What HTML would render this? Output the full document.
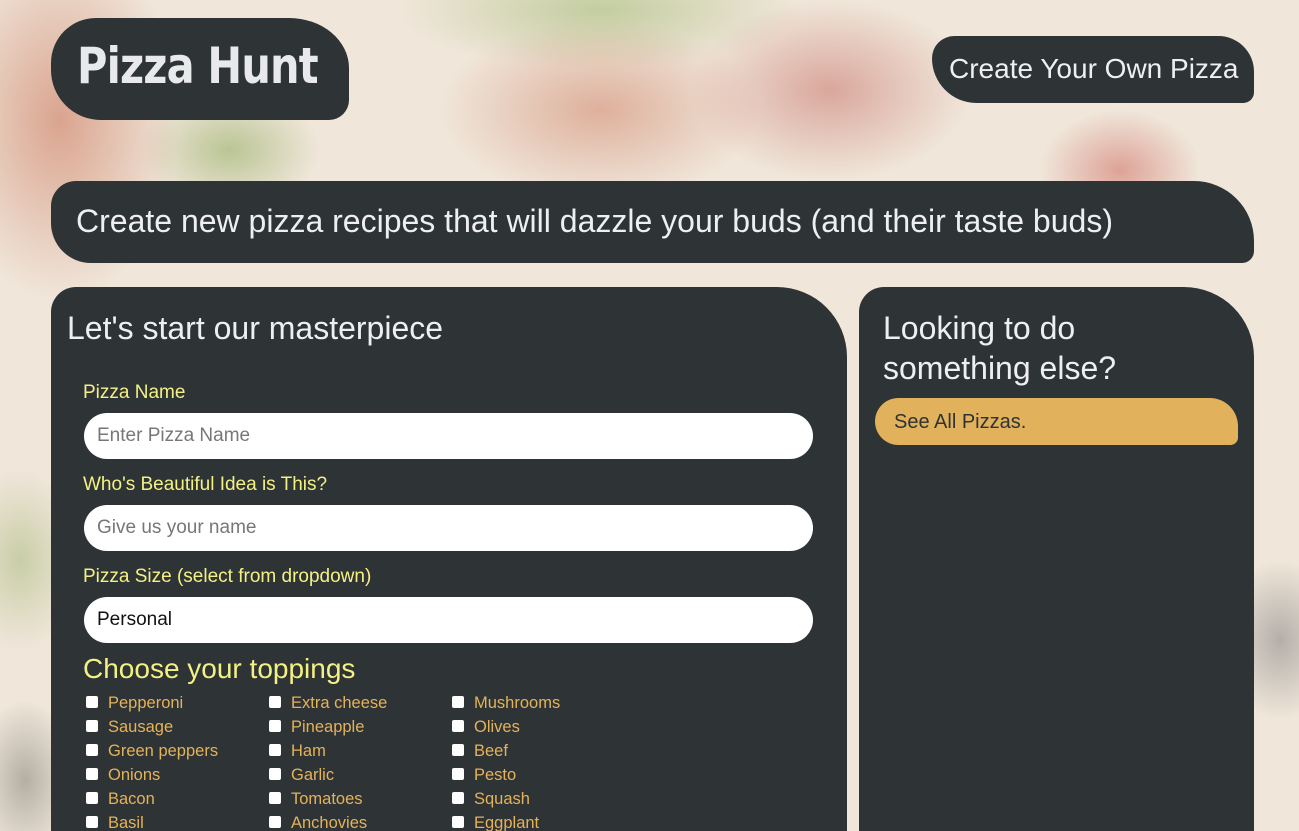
<!DOCTYPE html>
<html><head><meta charset="utf-8"><style>
*{box-sizing:border-box;margin:0;padding:0}
html,body{width:1299px;height:831px;overflow:hidden}
body{font-family:"Liberation Sans",Arial,sans-serif;position:relative;
background:
radial-gradient(ellipse 120px 180px at 60px 120px,rgba(200,110,80,.55),transparent),
radial-gradient(ellipse 160px 90px at 600px 110px,rgba(200,110,80,.45),transparent),
radial-gradient(ellipse 140px 90px at 830px 90px,rgba(190,90,80,.45),transparent),
radial-gradient(ellipse 200px 60px at 600px 10px,rgba(150,180,100,.5),transparent),
radial-gradient(ellipse 90px 60px at 230px 150px,rgba(140,170,90,.55),transparent),
radial-gradient(ellipse 60px 90px at 20px 560px,rgba(140,170,90,.4),transparent),
radial-gradient(ellipse 60px 80px at 1280px 640px,rgba(120,120,120,.5),transparent),
radial-gradient(ellipse 80px 60px at 1120px 170px,rgba(200,80,70,.45),transparent),
radial-gradient(ellipse 50px 80px at 25px 780px,rgba(120,120,110,.5),transparent),
#f0e6da;}
.dark{background:#2e3336;position:absolute}
.logo{left:51px;top:18px;width:298px;height:102px;border-radius:45px 60px 20px 50px/45px 50px 20px 50px;color:#e8e9eb;font-family:"DejaVu Sans",sans-serif;font-weight:bold;font-size:50px;padding:19px 0 0 26px;letter-spacing:-1px;white-space:nowrap}
.logo span{display:inline-block;transform:scaleX(.83);transform-origin:left}
.cta{left:932px;top:36px;width:322px;height:67px;border-radius:25px 40px 12px 50px;color:#eeeff1;font-size:28px;padding:17px 0 0 17px;white-space:nowrap}
.tag{left:51px;top:181px;width:1203px;height:82px;border-radius:25px 60px 12px 40px;color:#eeeff1;font-size:32px;padding:22px 0 0 25px;white-space:nowrap}
.main{left:51px;top:287px;width:796px;height:560px;border-radius:25px 70px 0 0}
.side{left:859px;top:287px;width:395px;height:560px;border-radius:25px 70px 0 0}
h2{font-weight:normal;color:#eeeff1;font-size:32px}
.main h2{position:absolute;left:16px;top:23px}
.side h2{position:absolute;left:24px;top:21px;line-height:40px}
label.l{position:absolute;left:32px;color:#f4f184;font-size:19px}
.in{position:absolute;left:33px;width:729px;height:46px;background:#fff;border-radius:23px;font-size:19px;color:#777;padding:12px 0 0 13px}
.tp{position:absolute;left:32px;top:366px;color:#f4f184;font-size:28px}
.grid{position:absolute;left:36px;top:407px}
.it{position:absolute;color:#e4b25a;font-size:16.5px;white-space:nowrap}
.it:before{content:"";position:absolute;left:-1px;top:2px;width:12px;height:12px;background:#fff;border-radius:2px}
.it span{margin-left:21px}
.btn{position:absolute;left:16px;top:111px;width:363px;height:47px;background:#e2b15b;border-radius:25px 30px 8px 25px;color:#2e3336;font-size:20px;padding:13px 0 0 19px}
</style></head><body>
<div class="dark logo"><span>Pizza Hunt</span></div>
<div class="dark cta">Create Your Own Pizza</div>
<div class="dark tag">Create new pizza recipes that will dazzle your buds (and their taste buds)</div>
<div class="dark main">
<h2>Let's start our masterpiece</h2>
<label class="l" style="top:95px">Pizza Name</label>
<div class="in" style="top:126px">Enter Pizza Name</div>
<label class="l" style="top:187px">Who's Beautiful Idea is This?</label>
<div class="in" style="top:218px">Give us your name</div>
<label class="l" style="top:279px">Pizza Size (select from dropdown)</label>
<div class="in" style="top:310px;color:#111">Personal</div>
<div class="tp">Choose your toppings</div>
<div class="grid">
<div class="it" style="left:0;top:0"><span>Pepperoni</span></div>
<div class="it" style="left:0;top:24px"><span>Sausage</span></div>
<div class="it" style="left:0;top:48px"><span>Green peppers</span></div>
<div class="it" style="left:0;top:72px"><span>Onions</span></div>
<div class="it" style="left:0;top:96px"><span>Bacon</span></div>
<div class="it" style="left:0;top:120px"><span>Basil</span></div>
<div class="it" style="left:183px;top:0"><span>Extra cheese</span></div>
<div class="it" style="left:183px;top:24px"><span>Pineapple</span></div>
<div class="it" style="left:183px;top:48px"><span>Ham</span></div>
<div class="it" style="left:183px;top:72px"><span>Garlic</span></div>
<div class="it" style="left:183px;top:96px"><span>Tomatoes</span></div>
<div class="it" style="left:183px;top:120px"><span>Anchovies</span></div>
<div class="it" style="left:366px;top:0"><span>Mushrooms</span></div>
<div class="it" style="left:366px;top:24px"><span>Olives</span></div>
<div class="it" style="left:366px;top:48px"><span>Beef</span></div>
<div class="it" style="left:366px;top:72px"><span>Pesto</span></div>
<div class="it" style="left:366px;top:96px"><span>Squash</span></div>
<div class="it" style="left:366px;top:120px"><span>Eggplant</span></div>
</div>
</div>
<div class="dark side">
<h2>Looking to do<br>something else?</h2>
<div class="btn">See All Pizzas.</div>
</div>
</body></html>
